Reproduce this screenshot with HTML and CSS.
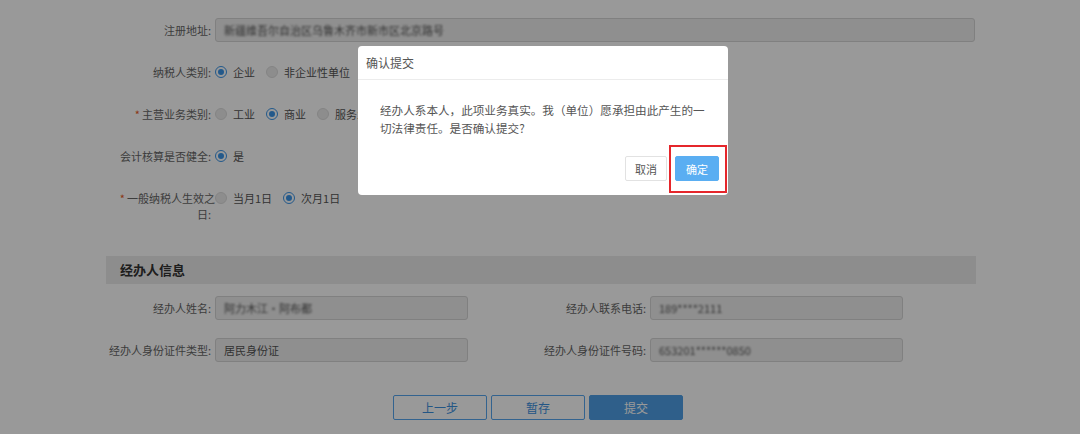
FILE: index.html
```html
<!DOCTYPE html>
<html lang="zh-CN">
<head>
    <meta charset="UTF-8">
    <title>确认提交</title>
    <link rel="stylesheet" href="styles.css">
</head>
<body>
    <div class="page">
        <div class="row">
            <div class="label">注册地址:</div>
            <div class="input wide"><span class="blur">新疆维吾尔自治区乌鲁木齐市新市区北京路号</span></div>
        </div>
        <div class="row">
            <div class="label">纳税人类别:</div>
            <div class="radios">
                <span class="radio checked"></span><span class="opt">企业</span>
                <span class="radio"></span><span class="opt">非企业性单位</span>
                <span class="radio"></span>
            </div>
        </div>
        <div class="row">
            <div class="label"><span class="star">*</span>主营业务类别:</div>
            <div class="radios">
                <span class="radio"></span><span class="opt">工业</span>
                <span class="radio checked"></span><span class="opt">商业</span>
                <span class="radio"></span><span class="opt">服务业</span>
            </div>
        </div>
        <div class="row">
            <div class="label">会计核算是否健全:</div>
            <div class="radios">
                <span class="radio checked"></span><span class="opt">是</span>
            </div>
        </div>
        <div class="row top">
            <div class="label"><span class="star">*</span>一般纳税人生效之<br><span class="tail">日:</span></div>
            <div class="radios">
                <span class="radio"></span><span class="opt">当月1日</span>
                <span class="radio checked"></span><span class="opt">次月1日</span>
            </div>
        </div>

        <div class="section_title">经办人信息</div>
        <div class="grid">
            <div class="row">
                <div class="label">经办人姓名:</div>
                <div class="input"><span class="blur">阿力木江·阿布都</span></div>
            </div>
            <div class="row">
                <div class="label">经办人联系电话:</div>
                <div class="input"><span class="blur">189****2111</span></div>
            </div>
            <div class="row">
                <div class="label">经办人身份证件类型:</div>
                <div class="input">居民身份证</div>
            </div>
            <div class="row">
                <div class="label">经办人身份证件号码:</div>
                <div class="input"><span class="blur">653201******0850</span></div>
            </div>
        </div>

        <div class="buttons">
            <button class="btn">上一步</button>
            <button class="btn">暂存</button>
            <button class="btn primary">提交</button>
        </div>
    </div>

    <div class="mask"></div>

    <div class="modal">
        <div class="modal_header">确认提交</div>
        <div class="modal_body">经办人系本人，此项业务真实。我（单位）愿承担由此产生的一<br>切法律责任。是否确认提交?</div>
        <div class="modal_footer">
            <button class="mbtn">取消</button>
            <button class="mbtn ok">确定</button>
        </div>
        <div class="mark"></div>
    </div>
</body>
</html>
```

FILE: styles.css
```css
body {
    margin: 0;
    background: #fff;
    font-family: "Noto Sans CJK SC", "Liberation Sans", sans-serif;
    font-size: 11px;
    color: #666;
}

.page {
    width: 870px;
    margin-left: 106px;
    padding-top: 18px;
}

.row {
    display: flex;
    align-items: center;
    height: 24px;
    margin-bottom: 18px;
}
.row.top {
    align-items: flex-start;
    padding-top: 4px;
    line-height: 16px;
}

.label {
    width: 105px;
    padding-right: 4px;
    flex-shrink: 0;
    text-align: right;
    white-space: nowrap;
}
.row.top .label {
    width: 109px;
    padding-right: 0;
}
.tail {
    margin-right: 4px;
}
.star {
    color: #e85a1d;
    margin-right: 2px;
}

.input {
    width: 243px;
    height: 22px;
    line-height: 22px;
    padding-left: 8px;
    border: 1px solid #d6d6d6;
    border-radius: 3px;
    background: #eeeeee;
    color: #555;
    font-size: 11px;
    overflow: hidden;
    white-space: nowrap;
}
.input.wide {
    width: 750px;
}
.blur {
    filter: blur(1.3px);
    color: #555;
}

.radios {
    display: flex;
    align-items: center;
    height: 16px;
}
.radio {
    width: 10px;
    height: 10px;
    border: 1px solid #dcdcdc;
    border-radius: 50%;
    background: #ececec;
    margin-right: 6px;
    position: relative;
}
.radio.checked {
    border-color: #3b95e8;
    background: #fff;
}
.radio.checked::after {
    content: "";
    position: absolute;
    left: 2px;
    top: 2px;
    width: 6px;
    height: 6px;
    border-radius: 50%;
    background: #3b95e8;
}
.opt {
    margin-right: 11px;
    color: #555;
}

.section_title {
    margin-top: 42px;
    height: 28px;
    line-height: 28px;
    padding-left: 14px;
    background: #ececec;
    font-size: 13px;
    font-weight: bold;
    color: #333;
}

.grid {
    display: grid;
    grid-template-columns: 435px 435px;
    padding-top: 12px;
}

.buttons {
    display: flex;
    justify-content: center;
    gap: 4px;
    margin-top: 15px;
    padding-right: 6px;
}
.btn {
    width: 94px;
    height: 25px;
    border: 1px solid #56a5ee;
    border-radius: 2px;
    background: #fff;
    color: #3b8fde;
    font-family: inherit;
    font-size: 12px;
}
.btn.primary {
    background: #4f9fe6;
    border-color: #4f9fe6;
    color: #fff;
}

/* 遮罩 */
.mask {
    position: fixed;
    left: 0;
    top: 0;
    right: 0;
    bottom: 0;
    background: rgba(0, 0, 0, 0.4);
}

.modal {
    position: absolute;
    left: 358px;
    top: 46px;
    width: 370px;
    background: #fff;
    border-radius: 4px;
    color: #444;
}
.modal_header {
    height: 33px;
    line-height: 33px;
    padding-left: 8px;
    border-bottom: 1px solid #ececec;
    font-size: 12px;
    color: #555;
}
.modal_body {
    padding: 21px 10px 0 22px;
    line-height: 18px;
    font-size: 11.6px;
    color: #555;
}
.modal_footer {
    display: flex;
    justify-content: flex-end;
    gap: 8px;
    padding: 19px 9px 14px;
}
.mbtn {
    height: 25px;
    padding: 0 9px;
    border: 1px solid #e2e2e2;
    border-radius: 2px;
    background: #fff;
    color: #555;
    font-family: inherit;
    font-size: 11px;
}
.mbtn.ok {
    width: 44px;
    padding: 0;
    border-color: #5aaef2;
    background: #5aaef2;
    color: #fff;
}
.mark {
    position: absolute;
    left: 311px;
    top: 99px;
    width: 54px;
    height: 44px;
    border: 2px solid #e5262b;
}
```
